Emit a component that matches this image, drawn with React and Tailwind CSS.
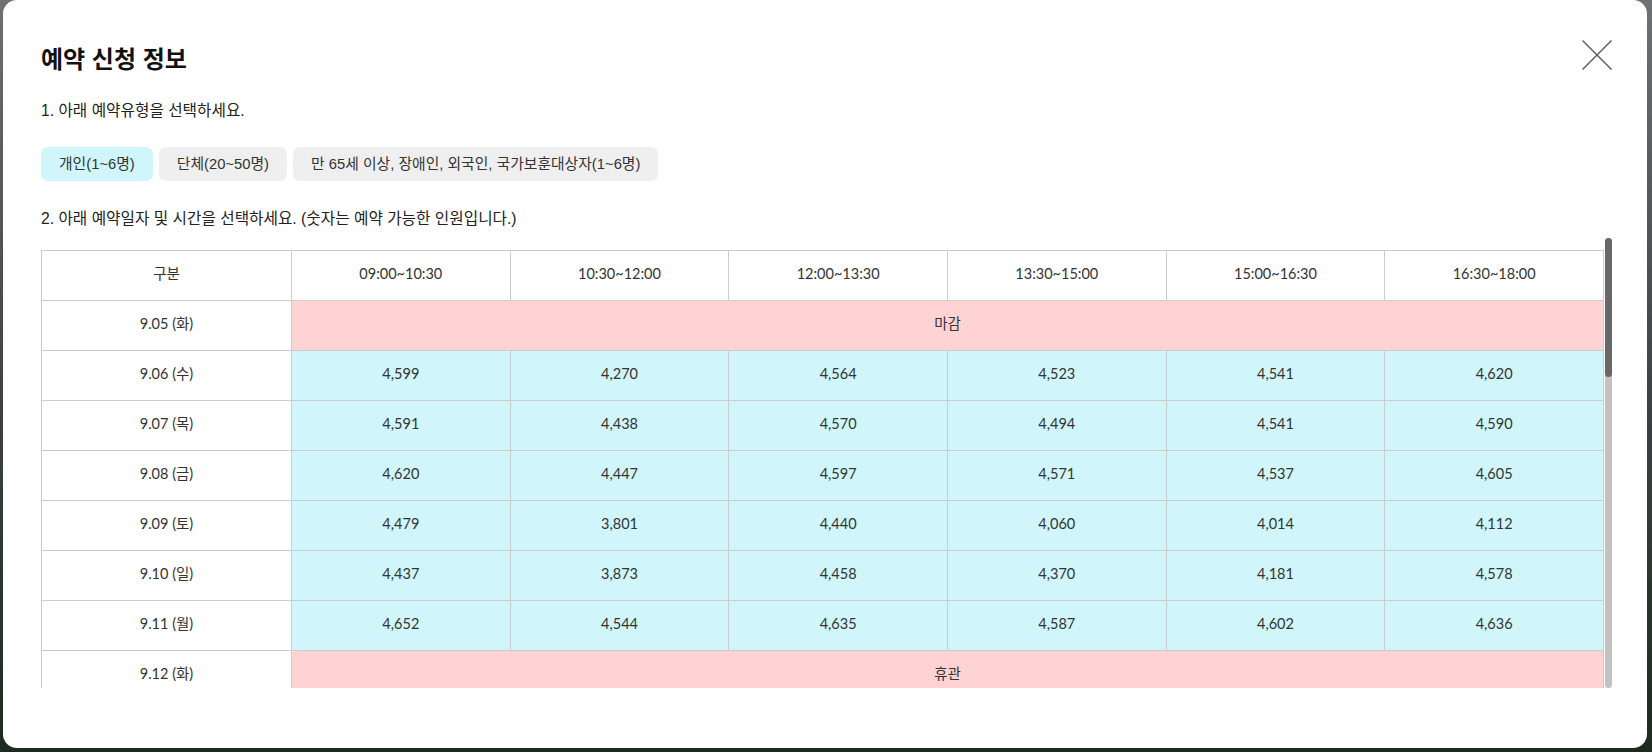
import { useMemo } from "react";

const times = ["09:00~10:30", "10:30~12:00", "12:00~13:30", "13:30~15:00", "15:00~16:30", "16:30~18:00"];

const rows = [
  { date: "9.05 (화)", note: "마감" },
  { date: "9.06 (수)", vals: ["4,599", "4,270", "4,564", "4,523", "4,541", "4,620"] },
  { date: "9.07 (목)", vals: ["4,591", "4,438", "4,570", "4,494", "4,541", "4,590"] },
  { date: "9.08 (금)", vals: ["4,620", "4,447", "4,597", "4,571", "4,537", "4,605"] },
  { date: "9.09 (토)", vals: ["4,479", "3,801", "4,440", "4,060", "4,014", "4,112"] },
  { date: "9.10 (일)", vals: ["4,437", "3,873", "4,458", "4,370", "4,181", "4,578"] },
  { date: "9.11 (월)", vals: ["4,652", "4,544", "4,635", "4,587", "4,602", "4,636"] },
  { date: "9.12 (화)", note: "휴관" },
  { date: "9.13 (수)", vals: ["4,660", "4,612", "4,648", "4,630", "4,655", "4,671"] },
  { date: "9.14 (목)", vals: ["4,671", "4,598", "4,653", "4,640", "4,662", "4,680"] },
];

function CloseIcon() {
  return (
    <svg width="30" height="30" viewBox="0 0 30 30" className="shrink-0">
      <path d="M0.5 0.5 L29.5 29.5 M29.5 0.5 L0.5 29.5" stroke="#5f5f5f" strokeWidth="1.5" fill="none" />
    </svg>
  );
}

export default function App() {
  const body = useMemo(() => rows, []);
  return (
    <div className="w-full h-[752px] overflow-hidden bg-linear-to-b from-[#6e7174] via-[#3f4446] to-[#1c2a1f] pl-[3px]">
      <div className="w-[1644px] h-[748px] bg-white rounded-[14px] pl-[38px] pr-[35px] pt-[40px] text-[#222] font-['Liberation_Sans','Noto_Sans_CJK_KR',sans-serif]">
        <div className="flex items-start justify-between">
          <h2 className="mt-[5px] text-[24px] leading-[30px] font-bold text-[#111]">예약 신청 정보</h2>
          <CloseIcon />
        </div>

        <p className="mt-[25px] text-[15.7px] leading-[22px] text-[#222]">1. 아래 예약유형을 선택하세요.</p>

        <div className="mt-[25px] flex gap-[6px]">
          <button className="h-[34px] px-[18px] rounded-[7px] bg-[#d0f6fc] text-[14.8px] text-[#333]">개인(1~6명)</button>
          <button className="h-[34px] px-[18px] rounded-[7px] bg-[#efefef] text-[14.8px] text-[#333]">단체(20~50명)</button>
          <button className="h-[34px] px-[18px] rounded-[7px] bg-[#efefef] text-[14.8px] text-[#333]">만 65세 이상, 장애인, 외국인, 국가보훈대상자(1~6명)</button>
        </div>

        <p className="mt-[27px] text-[15.7px] leading-[22px] text-[#222]">2. 아래 예약일자 및 시간을 선택하세요. (숫자는 예약 가능한 인원입니다.)</p>

        <div className="mt-[8px] flex h-[450px] w-[1571px]">
          <div className="w-[1563px] h-full overflow-hidden pt-[12px]">
            <table className="w-full table-fixed border-collapse font-['Lato','Noto_Sans_CJK_KR',sans-serif] text-[14.5px] text-[#333]">
              <colgroup>
                <col className="w-[250px]" />
                {times.map((t) => (
                  <col key={t} />
                ))}
              </colgroup>
              <thead>
                <tr className="h-[50px]">
                  <th className="border border-[#cccccc] font-normal pb-[3px]">구분</th>
                  {times.map((t) => (
                    <th key={t} className="border border-[#cccccc] font-normal pb-[3px]">{t}</th>
                  ))}
                </tr>
              </thead>
              <tbody>
                {body.map((r) => (
                  <tr key={r.date} className="h-[50px]">
                    <td className="border border-[#cccccc] text-center pb-[3px]">{r.date}</td>
                    {r.note ? (
                      <td colSpan={6} className="border border-[#cccccc] bg-[#ffd3d3] text-center pb-[3px]">{r.note}</td>
                    ) : (
                      r.vals.map((v, i) => (
                        <td key={i} className="border border-[#cccccc] bg-[#d0f6fc] text-center pb-[3px]">{v}</td>
                      ))
                    )}
                  </tr>
                ))}
              </tbody>
            </table>
          </div>
          {/* scrollbar */}
          <div className="w-[7px] ml-[1px] h-full rounded-[4px] bg-[#c2c2c2]">
            <div className="h-[139px] w-full rounded-[4px] bg-[#686868]"></div>
          </div>
        </div>
      </div>
    </div>
  );
}
